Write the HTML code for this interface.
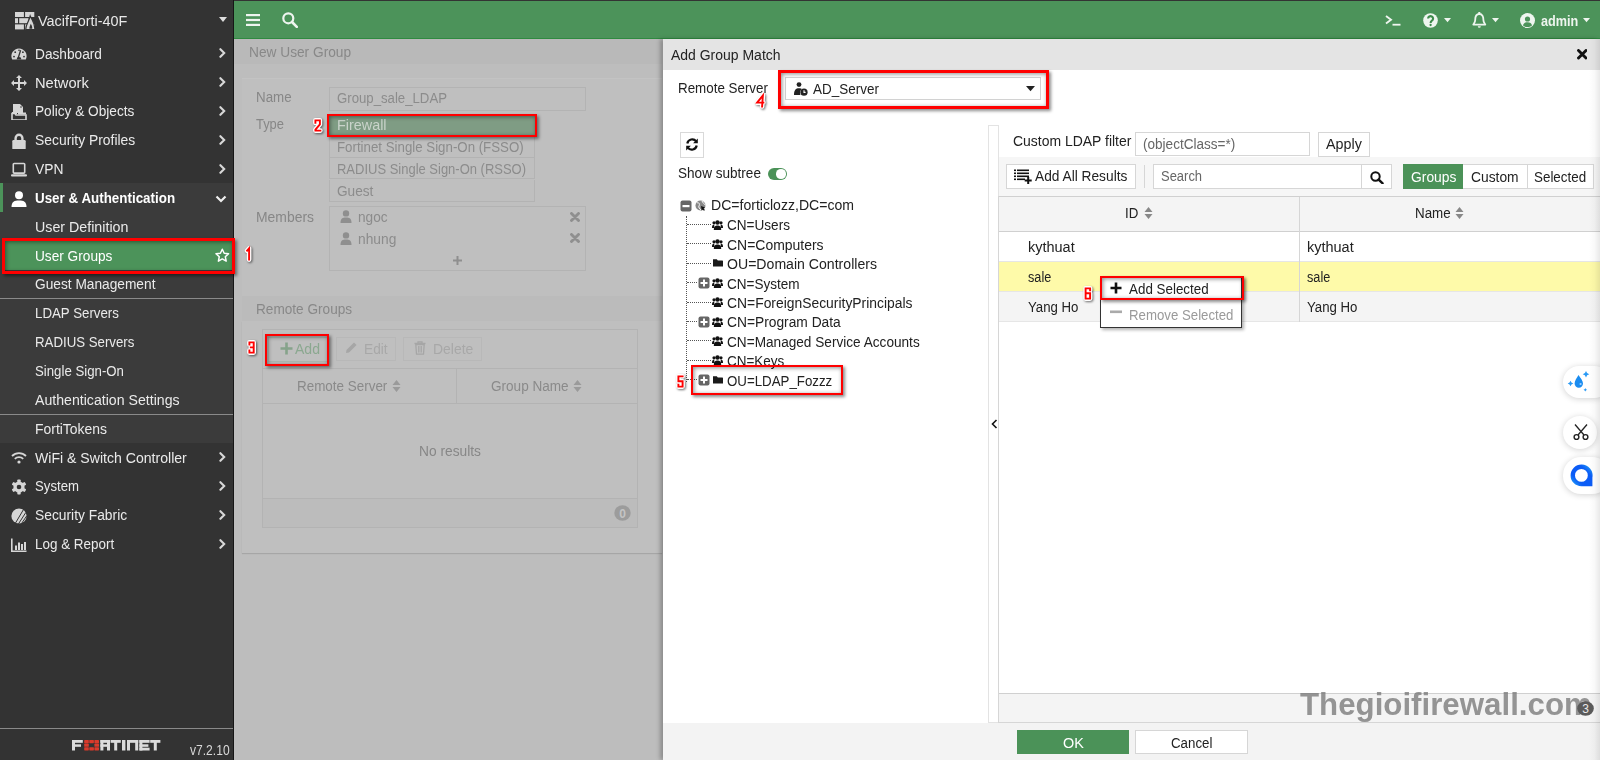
<!DOCTYPE html>
<html><head><meta charset="utf-8"><style>
html,body{margin:0;padding:0;}
body{width:1600px;height:760px;overflow:hidden;position:relative;font-family:"Liberation Sans", sans-serif;background:#fff;}
.b{position:absolute;}
.t{position:absolute;white-space:nowrap;line-height:20px;font-family:"Liberation Sans", sans-serif;}
.lab{position:absolute;white-space:nowrap;line-height:16px;font-family:"Liberation Sans", sans-serif;font-weight:bold;color:#f00;transform:scaleX(0.62);transform-origin:0 0;
 text-shadow:-1.5px 0 #fff,1.5px 0 #fff,0 -1.5px #fff,0 1.5px #fff,-1px -1px #fff,1px 1px #fff,-1px 1px #fff,1px -1px #fff,2px 2px 2px rgba(0,0,0,0.5);}
</style></head><body>
<div class="b" style="left:0.00px;top:0.00px;width:1600.00px;height:760.00px;background:#333"></div>
<div class="b" style="left:233.00px;top:0.00px;width:1.00px;height:760.00px;background:#161616"></div>
<div class="b" style="left:234.00px;top:1.00px;width:1366.00px;height:38.00px;background:#4c935a"></div>
<div class="b" style="left:234.00px;top:38.00px;width:1366.00px;height:1.00px;background:#2f8a40"></div>
<div class="b" style="left:0.00px;top:183.25px;width:233.00px;height:259.65px;background:#3b3b3b"></div>
<div class="b" style="left:0.00px;top:183.25px;width:3.00px;height:28.85px;background:#4c935a"></div>
<div class="b" style="left:0.00px;top:298.00px;width:233.00px;height:1.00px;background:#8a8a8a"></div>
<div class="b" style="left:0.00px;top:414.00px;width:233.00px;height:1.00px;background:#8a8a8a"></div>
<div class="b" style="left:3.00px;top:240.95px;width:230.00px;height:28.85px;background:#4c935a"></div>
<svg class="b" style="left:14.90px;top:11.60px;" width="21" height="18" viewBox="0 0 21 18"><g fill="#d6d6d6"><rect x="0" y="0" width="8.9" height="5"/><rect x="10.1" y="0" width="9.2" height="5"/><rect x="0" y="6.2" width="3" height="5"/><rect x="4.2" y="6.2" width="9.4" height="5"/><rect x="0" y="12.4" width="8.9" height="5"/><rect x="10.1" y="12.4" width="9.2" height="5"/></g><path d="M10.9 17.6 C10.2 13.2 13.6 10.5 15.2 4 C16.8 8 20.2 11 19.8 17.6 Z" fill="#d6d6d6" stroke="#333" stroke-width="1.2"/><path d="M14.4 16.8 C14.2 15 15.2 13.6 15.8 11.8 C16.8 13.4 17.5 15 17.2 16.8 Z" fill="#333"/></svg>
<div class="t" style="left:38.00px;top:10.52px;font-size:15.25px;color:#e8e8e8;font-weight:normal;transform:scaleX(0.9446);transform-origin:0 0;">VacifForti-40F</div>
<svg class="b" style="left:219.00px;top:17.00px;" width="8" height="6" viewBox="0 0 8 6"><path d="M0 0 H8 L4 5 Z" fill="#ddd"/></svg>
<svg class="b" style="left:10.50px;top:46.50px;" width="16" height="16" viewBox="0 0 16 16"><path d="M1.2 12.5 A7.6 7.6 0 1 1 14.8 12.5 Z" fill="#d6d6d6"/><path d="M7.2 11 L9.6 3.2" stroke="#333" stroke-width="1.3"/><path d="M5.6 12.5 A2.4 2.4 0 0 1 10.4 12.5 Z" fill="#333"/><circle cx="3" cy="9.6" r="0.9" fill="#333"/><circle cx="4.2" cy="5.2" r="0.9" fill="#333"/><circle cx="8" cy="3.2" r="0.8" fill="#333"/><circle cx="11.9" cy="5.2" r="0.9" fill="#333"/><circle cx="13" cy="9.6" r="0.9" fill="#333"/></svg>
<div class="t" style="left:34.80px;top:43.69px;font-size:14.75px;color:#eaeaea;font-weight:normal;transform:scaleX(0.9273);transform-origin:0 0;">Dashboard</div>
<svg class="b" style="left:218.50px;top:48.40px;" width="8" height="10" viewBox="0 0 8 10"><path d="M1.4 1.2 L5.2 5 L1.4 8.8" fill="none" stroke="#d8d8d8" stroke-width="2.1" stroke-linecap="round" stroke-linejoin="miter"/></svg>
<svg class="b" style="left:10.50px;top:75.35px;" width="16" height="16" viewBox="0 0 16 16"><path d="M8 0 L11 3 H9 V7 H13 V5 L16 8 L13 11 V9 H9 V13 H11 L8 16 L5 13 H7 V9 H3 V11 L0 8 L3 5 V7 H7 V3 H5 Z" fill="#d6d6d6"/></svg>
<div class="t" style="left:34.80px;top:72.54px;font-size:14.75px;color:#eaeaea;font-weight:normal;transform:scaleX(0.9954);transform-origin:0 0;">Network</div>
<svg class="b" style="left:218.50px;top:77.25px;" width="8" height="10" viewBox="0 0 8 10"><path d="M1.4 1.2 L5.2 5 L1.4 8.8" fill="none" stroke="#d8d8d8" stroke-width="2.1" stroke-linecap="round" stroke-linejoin="miter"/></svg>
<svg class="b" style="left:10.50px;top:104.20px;" width="16" height="16" viewBox="0 0 16 16"><path d="M2 0 H9 L12 3 V9 H2 Z" fill="#d6d6d6"/><circle cx="10" cy="3" r="0.8" fill="#333"/><path d="M1 9.5 H4 L5 11 H15 V16 H1 Z" fill="none" stroke="#d6d6d6" stroke-width="1.6"/><rect x="1" y="8" width="5" height="2" fill="#d6d6d6"/><rect x="7" y="8.5" width="8" height="2" fill="#d6d6d6"/></svg>
<div class="t" style="left:34.80px;top:101.39px;font-size:14.75px;color:#eaeaea;font-weight:normal;transform:scaleX(0.9256);transform-origin:0 0;">Policy &amp; Objects</div>
<svg class="b" style="left:218.50px;top:106.10px;" width="8" height="10" viewBox="0 0 8 10"><path d="M1.4 1.2 L5.2 5 L1.4 8.8" fill="none" stroke="#d8d8d8" stroke-width="2.1" stroke-linecap="round" stroke-linejoin="miter"/></svg>
<svg class="b" style="left:10.50px;top:133.05px;" width="16" height="16" viewBox="0 0 16 16"><path d="M4.6 7.5 V5.2 A3.4 3.4 0 0 1 11.4 5.2 V7.5" fill="none" stroke="#d6d6d6" stroke-width="2.4"/><rect x="1.3" y="7" width="13.4" height="9.5" rx="1.2" fill="#d6d6d6"/><circle cx="8" cy="4.2" r="0.0" fill="#333"/></svg>
<div class="t" style="left:34.80px;top:130.24px;font-size:14.75px;color:#eaeaea;font-weight:normal;transform:scaleX(0.9408);transform-origin:0 0;">Security Profiles</div>
<svg class="b" style="left:218.50px;top:134.95px;" width="8" height="10" viewBox="0 0 8 10"><path d="M1.4 1.2 L5.2 5 L1.4 8.8" fill="none" stroke="#d8d8d8" stroke-width="2.1" stroke-linecap="round" stroke-linejoin="miter"/></svg>
<svg class="b" style="left:10.50px;top:161.90px;" width="16" height="16" viewBox="0 0 16 16"><rect x="2.3" y="1.5" width="11.4" height="9.6" rx="0.8" fill="none" stroke="#d6d6d6" stroke-width="1.6"/><rect x="0" y="12.2" width="16" height="2.2" rx="1" fill="#d6d6d6"/></svg>
<div class="t" style="left:34.80px;top:159.09px;font-size:14.75px;color:#eaeaea;font-weight:normal;transform:scaleX(0.9388);transform-origin:0 0;">VPN</div>
<svg class="b" style="left:218.50px;top:163.80px;" width="8" height="10" viewBox="0 0 8 10"><path d="M1.4 1.2 L5.2 5 L1.4 8.8" fill="none" stroke="#d8d8d8" stroke-width="2.1" stroke-linecap="round" stroke-linejoin="miter"/></svg>
<svg class="b" style="left:10.50px;top:190.75px;" width="16" height="16" viewBox="0 0 16 16"><circle cx="8" cy="4.3" r="4" fill="#fff"/><path d="M0.5 16 C0.5 10.5 3.5 9.5 8 9.5 C12.5 9.5 15.5 10.5 15.5 16 Z" fill="#fff"/></svg>
<div class="t" style="left:34.80px;top:187.94px;font-size:14.75px;color:#fff;font-weight:bold;transform:scaleX(0.9076);transform-origin:0 0;">User &amp; Authentication</div>
<svg class="b" style="left:215.00px;top:194.75px;" width="12" height="8" viewBox="0 0 12 8"><path d="M1.5 1.5 L6 6 L10.5 1.5" fill="none" stroke="#eee" stroke-width="2.2"/></svg>
<div class="t" style="left:34.80px;top:216.79px;font-size:14.75px;color:#eaeaea;font-weight:normal;transform:scaleX(0.9654);transform-origin:0 0;">User Definition</div>
<div class="t" style="left:34.80px;top:245.64px;font-size:14.75px;color:#fff;font-weight:normal;transform:scaleX(0.9257);transform-origin:0 0;">User Groups</div>
<div class="t" style="left:34.80px;top:274.49px;font-size:14.75px;color:#eaeaea;font-weight:normal;transform:scaleX(0.9297);transform-origin:0 0;">Guest Management</div>
<div class="t" style="left:34.80px;top:303.34px;font-size:14.75px;color:#eaeaea;font-weight:normal;transform:scaleX(0.9008);transform-origin:0 0;">LDAP Servers</div>
<div class="t" style="left:34.80px;top:332.19px;font-size:14.75px;color:#eaeaea;font-weight:normal;transform:scaleX(0.8984);transform-origin:0 0;">RADIUS Servers</div>
<div class="t" style="left:34.80px;top:361.04px;font-size:14.75px;color:#eaeaea;font-weight:normal;transform:scaleX(0.8967);transform-origin:0 0;">Single Sign-On</div>
<div class="t" style="left:34.80px;top:389.89px;font-size:14.75px;color:#eaeaea;font-weight:normal;transform:scaleX(0.9583);transform-origin:0 0;">Authentication Settings</div>
<div class="t" style="left:34.80px;top:418.74px;font-size:14.75px;color:#eaeaea;font-weight:normal;transform:scaleX(0.9443);transform-origin:0 0;">FortiTokens</div>
<svg class="b" style="left:10.50px;top:450.40px;" width="16" height="16" viewBox="0 0 16 16"><path d="M1 6 A10 10 0 0 1 15 6" fill="none" stroke="#d6d6d6" stroke-width="1.8"/><path d="M3.8 8.8 A6 6 0 0 1 12.2 8.8" fill="none" stroke="#d6d6d6" stroke-width="1.8"/><circle cx="8" cy="12" r="1.6" fill="#d6d6d6"/></svg>
<div class="t" style="left:34.80px;top:447.59px;font-size:14.75px;color:#eaeaea;font-weight:normal;transform:scaleX(0.9547);transform-origin:0 0;">WiFi &amp; Switch Controller</div>
<svg class="b" style="left:218.50px;top:452.30px;" width="8" height="10" viewBox="0 0 8 10"><path d="M1.4 1.2 L5.2 5 L1.4 8.8" fill="none" stroke="#d8d8d8" stroke-width="2.1" stroke-linecap="round" stroke-linejoin="miter"/></svg>
<svg class="b" style="left:10.50px;top:479.25px;" width="16" height="16" viewBox="0 0 16 16"><g fill="#d6d6d6"><circle cx="8" cy="8" r="5.6"/><g transform="translate(8 8)"><rect x="-1.7" y="-7.5" width="3.4" height="15" rx="0.8"/><rect x="-1.7" y="-7.5" width="3.4" height="15" rx="0.8" transform="rotate(60)"/><rect x="-1.7" y="-7.5" width="3.4" height="15" rx="0.8" transform="rotate(120)"/></g></g><circle cx="8" cy="8" r="2.3" fill="#333"/></svg>
<div class="t" style="left:34.80px;top:476.44px;font-size:14.75px;color:#eaeaea;font-weight:normal;transform:scaleX(0.8934);transform-origin:0 0;">System</div>
<svg class="b" style="left:218.50px;top:481.15px;" width="8" height="10" viewBox="0 0 8 10"><path d="M1.4 1.2 L5.2 5 L1.4 8.8" fill="none" stroke="#d8d8d8" stroke-width="2.1" stroke-linecap="round" stroke-linejoin="miter"/></svg>
<svg class="b" style="left:10.50px;top:508.10px;" width="16" height="16" viewBox="0 0 16 16"><circle cx="8" cy="8" r="7.6" fill="#d6d6d6"/><path d="M4.5 15 L12.5 1.5 M7.5 15.8 L14.8 4.5 M10.5 15.5 L15.8 7.8" stroke="#333" stroke-width="1"/></svg>
<div class="t" style="left:34.80px;top:505.29px;font-size:14.75px;color:#eaeaea;font-weight:normal;transform:scaleX(0.9364);transform-origin:0 0;">Security Fabric</div>
<svg class="b" style="left:218.50px;top:510.00px;" width="8" height="10" viewBox="0 0 8 10"><path d="M1.4 1.2 L5.2 5 L1.4 8.8" fill="none" stroke="#d8d8d8" stroke-width="2.1" stroke-linecap="round" stroke-linejoin="miter"/></svg>
<svg class="b" style="left:10.50px;top:536.95px;" width="16" height="16" viewBox="0 0 16 16"><path d="M0.8 1.5 V14.2 H15.5" fill="none" stroke="#d6d6d6" stroke-width="1.6"/><rect x="4" y="8.5" width="2" height="4.5" fill="#d6d6d6"/><rect x="7" y="5.5" width="2" height="7.5" fill="#d6d6d6"/><rect x="10" y="7" width="2" height="6" fill="#d6d6d6"/><rect x="13" y="5" width="2" height="8" fill="#d6d6d6"/></svg>
<div class="t" style="left:34.80px;top:534.14px;font-size:14.75px;color:#eaeaea;font-weight:normal;transform:scaleX(0.9115);transform-origin:0 0;">Log &amp; Report</div>
<svg class="b" style="left:218.50px;top:538.85px;" width="8" height="10" viewBox="0 0 8 10"><path d="M1.4 1.2 L5.2 5 L1.4 8.8" fill="none" stroke="#d8d8d8" stroke-width="2.1" stroke-linecap="round" stroke-linejoin="miter"/></svg>
<svg class="b" style="left:214.50px;top:247.50px;" width="15" height="15" viewBox="0 0 15 15"><path d="M7.3 1.2 L9.2 5.2 L13.6 5.7 L10.3 8.7 L11.2 13.1 L7.3 10.9 L3.4 13.1 L4.3 8.7 L1 5.7 L5.4 5.2 Z" fill="none" stroke="#fff" stroke-width="1.5" stroke-linejoin="round"/></svg>
<div class="b" style="left:0.00px;top:728.00px;width:233.00px;height:1.00px;background:#8a8a8a"></div>
<svg class="b" style="left:72.00px;top:740.00px;" width="90" height="11" viewBox="0 0 90 11"><g fill="#dcdcdc"><rect x="0" y="0" width="10.8" height="2.8"/><rect x="0" y="0" width="3" height="10.5"/><rect x="0" y="4.3" width="9" height="2.5"/><rect x="28.4" y="0" width="3" height="10.5"/><rect x="28.4" y="0" width="9.6" height="2.8"/><rect x="35" y="0" width="3" height="6.8"/><rect x="28.4" y="4.3" width="9.6" height="2.5"/><rect x="35" y="6.5" width="3" height="4"/><rect x="38.6" y="0" width="10.2" height="2.8"/><rect x="42.2" y="0" width="3" height="10.5"/><rect x="50" y="0" width="3.4" height="10.5"/><rect x="55" y="0" width="3" height="10.5"/><rect x="55" y="0" width="11.2" height="2.8"/><rect x="63.2" y="0" width="3" height="10.5"/><rect x="67.4" y="0" width="3" height="10.5"/><rect x="67.4" y="0" width="10.2" height="2.8"/><rect x="67.4" y="4.3" width="9" height="2.5"/><rect x="67.4" y="7.7" width="10.2" height="2.8"/><rect x="78.2" y="0" width="10.2" height="2.8"/><rect x="81.8" y="0" width="3" height="10.5"/></g><g fill="#da3a2b"><rect x="12.2" y="0.0" width="4.6" height="3.2" rx="0.6"/><rect x="17.3" y="0.0" width="4.6" height="3.2" rx="0.6"/><rect x="22.4" y="0.0" width="4.6" height="3.2" rx="0.6"/><rect x="12.2" y="3.6" width="4.6" height="3.2" rx="0.6"/><rect x="22.4" y="3.6" width="4.6" height="3.2" rx="0.6"/><rect x="12.2" y="7.2" width="4.6" height="3.2" rx="0.6"/><rect x="17.3" y="7.2" width="4.6" height="3.2" rx="0.6"/><rect x="22.4" y="7.2" width="4.6" height="3.2" rx="0.6"/></g></svg>
<div class="t" style="left:189.50px;top:741.24px;font-size:13.75px;color:#d8d8d8;font-weight:normal;transform:scaleX(0.8778);transform-origin:0 0;">v7.2.10</div>
<svg class="b" style="left:245.50px;top:14.00px;" width="14" height="12" viewBox="0 0 14 12"><rect x="0" y="0" width="14" height="2.2" fill="#eef5ef"/><rect x="0" y="4.9" width="14" height="2.2" fill="#eef5ef"/><rect x="0" y="9.8" width="14" height="2.2" fill="#eef5ef"/></svg>
<svg class="b" style="left:281.50px;top:12.00px;" width="16" height="16" viewBox="0 0 16 16"><circle cx="6.3" cy="6.3" r="5" fill="none" stroke="#eef5ef" stroke-width="2.2"/><path d="M10 10 L14.8 14.8" stroke="#eef5ef" stroke-width="2.6" stroke-linecap="round"/></svg>
<svg class="b" style="left:1385.00px;top:14.50px;" width="17" height="11" viewBox="0 0 17 11"><path d="M1 1 L6 4.8 L1 8.6" fill="none" stroke="#eef5ef" stroke-width="1.9"/><rect x="7.5" y="8.8" width="8" height="1.8" fill="#eef5ef"/></svg>
<svg class="b" style="left:1423.00px;top:12.50px;" width="16" height="16" viewBox="0 0 16 16"><circle cx="7.5" cy="7.5" r="7.3" fill="#eef5ef"/><path d="M5.1 5.6 A2.5 2.4 0 1 1 8.9 7.6 C7.8 8.3 7.6 8.7 7.6 10" fill="none" stroke="#3d8a4b" stroke-width="2.1"/><circle cx="7.6" cy="12" r="1.15" fill="#3d8a4b"/></svg>
<svg class="b" style="left:1444.00px;top:18.00px;" width="7" height="5" viewBox="0 0 7 5"><path d="M0 0 H7 L3.5 4.2 Z" fill="#eef5ef"/></svg>
<svg class="b" style="left:1472.00px;top:12.00px;" width="15" height="16" viewBox="0 0 15 16"><path d="M7.3 2 C4 2 3.2 5 3.2 8 C3.2 11 1.3 11.8 1.3 12.6 H13.3 C13.3 11.8 11.4 11 11.4 8 C11.4 5 10.6 2 7.3 2 Z" fill="none" stroke="#eef5ef" stroke-width="1.8" stroke-linejoin="round"/><rect x="6.3" y="0" width="2" height="2.5" fill="#eef5ef"/><path d="M5.8 14.3 H8.8 A1.5 1.5 0 0 1 5.8 14.3Z" fill="#eef5ef"/></svg>
<svg class="b" style="left:1492.00px;top:18.00px;" width="7" height="5" viewBox="0 0 7 5"><path d="M0 0 H7 L3.5 4.2 Z" fill="#eef5ef"/></svg>
<svg class="b" style="left:1520.00px;top:12.50px;" width="16" height="16" viewBox="0 0 16 16"><circle cx="7.5" cy="7.5" r="7.5" fill="#eef5ef"/><circle cx="7.5" cy="6" r="2.6" fill="#4c935a"/><path d="M3 12.5 C3.5 10 5 9.3 7.5 9.3 C10 9.3 11.5 10 12 12.5 C10.5 13.6 9 14 7.5 14 C6 14 4.5 13.6 3 12.5Z" fill="#4c935a"/></svg>
<div class="t" style="left:1540.80px;top:11.20px;font-size:15px;color:#eef5ef;font-weight:bold;transform:scaleX(0.845);transform-origin:0 0;">admin</div>
<svg class="b" style="left:1583.00px;top:18.00px;" width="7" height="5" viewBox="0 0 7 5"><path d="M0 0 H7 L3.5 4.2 Z" fill="#eef5ef"/></svg>
<div class="b" style="left:234.00px;top:39.00px;width:429.00px;height:721.00px;background:#bdbdbd"></div>
<div class="b" style="left:234.00px;top:39.00px;width:428.00px;height:25.00px;background:#b9b9b9"></div>
<div class="t" style="left:249.00px;top:41.89px;font-size:14.75px;color:#888;font-weight:normal;transform:scaleX(0.9294);transform-origin:0 0;">New User Group</div>
<div class="b" style="left:242.00px;top:78.00px;width:420.00px;height:218.00px;background:#bfbfbf;border-top:1px solid #c3c3c3"></div>
<div class="t" style="left:256.40px;top:87.29px;font-size:14.75px;color:#878787;font-weight:normal;transform:scaleX(0.9045);transform-origin:0 0;">Name</div>
<div class="t" style="left:256.40px;top:113.69px;font-size:14.75px;color:#878787;font-weight:normal;transform:scaleX(0.8750);transform-origin:0 0;">Type</div>
<div class="t" style="left:255.70px;top:206.89px;font-size:14.75px;color:#878787;font-weight:normal;transform:scaleX(0.9431);transform-origin:0 0;">Members</div>
<div class="b" style="left:329.00px;top:87.00px;width:257.00px;height:23.50px;border:1px solid #b3b3b3;box-sizing:border-box;background:#bfbfbf"></div>
<div class="t" style="left:337.10px;top:87.89px;font-size:14.75px;color:#8c8c8c;font-weight:normal;transform:scaleX(0.8943);transform-origin:0 0;">Group_sale_LDAP</div>
<div class="b" style="left:329.00px;top:114.00px;width:208.00px;height:22.00px;background:#7f9c84"></div>
<div class="t" style="left:337.10px;top:114.89px;font-size:14.75px;color:#c9d3ca;font-weight:normal;transform:scaleX(0.9754);transform-origin:0 0;">Firewall</div>
<div class="b" style="left:329.00px;top:136.00px;width:206.00px;height:21.60px;border:1px solid #b3b3b3;box-sizing:border-box;border-top:none"></div>
<div class="t" style="left:337.10px;top:137.19px;font-size:14.75px;color:#8c8c8c;font-weight:normal;transform:scaleX(0.9002);transform-origin:0 0;">Fortinet Single Sign-On (FSSO)</div>
<div class="b" style="left:329.00px;top:157.60px;width:206.00px;height:21.90px;border:1px solid #b3b3b3;box-sizing:border-box;border-top:none"></div>
<div class="t" style="left:337.10px;top:159.09px;font-size:14.75px;color:#8c8c8c;font-weight:normal;transform:scaleX(0.8801);transform-origin:0 0;">RADIUS Single Sign-On (RSSO)</div>
<div class="b" style="left:329.00px;top:179.50px;width:206.00px;height:22.30px;border:1px solid #b3b3b3;box-sizing:border-box;border-top:none"></div>
<div class="t" style="left:337.10px;top:181.39px;font-size:14.75px;color:#8c8c8c;font-weight:normal;transform:scaleX(0.9248);transform-origin:0 0;">Guest</div>
<div class="b" style="left:329.00px;top:205.50px;width:257.00px;height:65.80px;border:1px solid #b3b3b3;box-sizing:border-box"></div>
<svg class="b" style="left:339.50px;top:210.00px;" width="12" height="13" viewBox="0 0 12 13"><circle cx="6" cy="3.4" r="3.2" fill="#8f8f8f"/><path d="M0.5 13 C0.5 8.5 2.5 7.6 6 7.6 C9.5 7.6 11.5 8.5 11.5 13 Z" fill="#8f8f8f"/></svg>
<svg class="b" style="left:339.50px;top:231.50px;" width="12" height="13" viewBox="0 0 12 13"><circle cx="6" cy="3.4" r="3.2" fill="#8f8f8f"/><path d="M0.5 13 C0.5 8.5 2.5 7.6 6 7.6 C9.5 7.6 11.5 8.5 11.5 13 Z" fill="#8f8f8f"/></svg>
<div class="t" style="left:358.00px;top:206.89px;font-size:14.75px;color:#8c8c8c;font-weight:normal;transform:scaleX(0.9250);transform-origin:0 0;">ngoc</div>
<div class="t" style="left:358.00px;top:228.89px;font-size:14.75px;color:#8c8c8c;font-weight:normal;transform:scaleX(0.9341);transform-origin:0 0;">nhung</div>
<svg class="b" style="left:569.50px;top:211.50px;" width="10" height="10" viewBox="0 0 10 10"><path d="M1.5 1.5 L8.5 8.5 M8.5 1.5 L1.5 8.5" stroke="#8f8f8f" stroke-width="2.9" stroke-linecap="round"/></svg>
<svg class="b" style="left:569.50px;top:232.50px;" width="10" height="10" viewBox="0 0 10 10"><path d="M1.5 1.5 L8.5 8.5 M8.5 1.5 L1.5 8.5" stroke="#8f8f8f" stroke-width="2.9" stroke-linecap="round"/></svg>
<svg class="b" style="left:453.00px;top:255.50px;" width="9" height="9" viewBox="0 0 9 9"><path d="M4.5 0 V9 M0 4.5 H9" stroke="#8f8f8f" stroke-width="2"/></svg>
<div class="b" style="left:242.00px;top:296.00px;width:420.00px;height:25.00px;background:#bbbbbb"></div>
<div class="t" style="left:255.70px;top:298.69px;font-size:14.75px;color:#888;font-weight:normal;transform:scaleX(0.9231);transform-origin:0 0;">Remote Groups</div>
<div class="b" style="left:242.00px;top:321.00px;width:420.00px;height:232.00px;background:#bfbfbf;box-shadow:0 1px 1px rgba(0,0,0,0.12)"></div>
<div class="b" style="left:262.00px;top:328.50px;width:376.00px;height:199.00px;border:1px solid #b3b3b3;box-sizing:border-box;background:#bfbfbf"></div>
<div class="b" style="left:262.00px;top:368.00px;width:376.00px;height:1.00px;background:#b3b3b3"></div>
<div class="b" style="left:262.00px;top:403.00px;width:376.00px;height:1.00px;background:#b3b3b3"></div>
<div class="b" style="left:262.00px;top:498.00px;width:376.00px;height:1.00px;background:#b3b3b3"></div>
<div class="b" style="left:263.00px;top:499.00px;width:374.00px;height:28.00px;background:#bcbcbc"></div>
<div class="b" style="left:456.00px;top:369.00px;width:1.00px;height:34.00px;background:#b3b3b3"></div>
<div class="b" style="left:268.00px;top:337.00px;width:60.00px;height:25.00px;border:1px solid #b0b8b1;box-sizing:border-box"></div>
<svg class="b" style="left:279.50px;top:341.50px;" width="13" height="13" viewBox="0 0 13 13"><path d="M6.5 0.5 V12.5 M0.5 6.5 H12.5" stroke="#86a38b" stroke-width="2.6"/></svg>
<div class="t" style="left:294.80px;top:338.69px;font-size:14.75px;color:#8ba890;font-weight:normal;transform:scaleX(0.9524);transform-origin:0 0;">Add</div>
<div class="b" style="left:335.50px;top:337.00px;width:60.50px;height:24.00px;border:1px solid #b8b8b8;box-sizing:border-box"></div>
<svg class="b" style="left:344.00px;top:341.00px;" width="14" height="14" viewBox="0 0 14 14"><path d="M2 12 L2.5 9 L10 1.5 L12.5 4 L5 11.5 Z" fill="#a6a6a6"/></svg>
<div class="t" style="left:364.20px;top:338.69px;font-size:14.75px;color:#a8a8a8;font-weight:normal;transform:scaleX(0.9294);transform-origin:0 0;">Edit</div>
<div class="b" style="left:403.00px;top:337.00px;width:78.50px;height:24.00px;border:1px solid #b8b8b8;box-sizing:border-box"></div>
<svg class="b" style="left:414.00px;top:341.00px;" width="12" height="14" viewBox="0 0 12 14"><path d="M0.5 2.5 H11.5 M4 2.5 V0.8 H8 V2.5" stroke="#a6a6a6" stroke-width="1.3" fill="none"/><path d="M1.8 3.5 H10.2 L9.5 13.2 H2.5 Z" fill="none" stroke="#a6a6a6" stroke-width="1.3"/><path d="M4.5 5 V11.5 M6 5 V11.5 M7.5 5 V11.5" stroke="#a6a6a6" stroke-width="0.9"/></svg>
<div class="t" style="left:433.20px;top:338.69px;font-size:14.75px;color:#a8a8a8;font-weight:normal;transform:scaleX(0.9450);transform-origin:0 0;">Delete</div>
<div class="t" style="left:297.10px;top:375.59px;font-size:14.75px;color:#8a8a8a;font-weight:normal;transform:scaleX(0.9108);transform-origin:0 0;">Remote Server</div>
<svg class="b" style="left:391.50px;top:379.00px;" width="9" height="14" viewBox="0 0 9 14"><path d="M0.5 6 L4.5 1 L8.5 6 Z M0.5 8 L4.5 13 L8.5 8 Z" fill="#9a9a9a"/></svg>
<div class="t" style="left:490.60px;top:375.59px;font-size:14.75px;color:#8a8a8a;font-weight:normal;transform:scaleX(0.9195);transform-origin:0 0;">Group Name</div>
<svg class="b" style="left:573.00px;top:379.00px;" width="9" height="14" viewBox="0 0 9 14"><path d="M0.5 6 L4.5 1 L8.5 6 Z M0.5 8 L4.5 13 L8.5 8 Z" fill="#9a9a9a"/></svg>
<div class="t" style="left:419.00px;top:441.29px;font-size:14.75px;color:#878787;font-weight:normal;transform:scaleX(0.9323);transform-origin:0 0;">No results</div>
<svg class="b" style="left:614.00px;top:504.50px;" width="17" height="16" viewBox="0 0 17 16"><ellipse cx="8.5" cy="8" rx="8.2" ry="7.8" fill="#9c9c9c"/><text x="8.5" y="12.5" text-anchor="middle" font-family="Liberation Sans" font-weight="bold" font-size="12" fill="#c4c4c4">0</text></svg>
<div class="b" style="left:663.00px;top:39.00px;width:937.00px;height:721.00px;background:#fff;box-shadow:-3px 0 4px rgba(0,0,0,0.25)"></div>
<div class="b" style="left:663.00px;top:39.00px;width:937.00px;height:31.00px;background:#e4e4e4"></div>
<div class="t" style="left:670.50px;top:44.72px;font-size:15.25px;color:#222;font-weight:normal;transform:scaleX(0.9163);transform-origin:0 0;">Add Group Match</div>
<svg class="b" style="left:1576.50px;top:49.00px;" width="10.5" height="10.5" viewBox="0 0 10.5 10.5"><path d="M1.5 1.5 L9.0 9.0 M9.0 1.5 L1.5 9.0" stroke="#111" stroke-width="2.9" stroke-linecap="round"/></svg>
<div class="t" style="left:678.40px;top:78.09px;font-size:14.75px;color:#222;font-weight:normal;transform:scaleX(0.9068);transform-origin:0 0;">Remote Server</div>
<div class="b" style="left:784.50px;top:77.00px;width:256.50px;height:22.50px;border:1px solid #d2d2d2;box-sizing:border-box;background:#fff"></div>
<svg class="b" style="left:793.50px;top:82.00px;" width="14" height="14" viewBox="0 0 14 14"><circle cx="5" cy="2.6" r="2.4" fill="#222"/><path d="M0 13 C0 8 1.8 6.3 5 6.3 C6.5 6.3 7.3 6.6 8 7 C6.5 8 6 9.5 6 11 C6 12 6.3 12.6 6.6 13 Z" fill="#222"/><circle cx="10" cy="10.2" r="3.6" fill="#222"/><path d="M10 8.2 V10.4 H11.6" stroke="#fff" stroke-width="1.1" fill="none"/></svg>
<div class="t" style="left:813.00px;top:78.72px;font-size:15.25px;color:#222;font-weight:normal;transform:scaleX(0.8832);transform-origin:0 0;">AD_Server</div>
<svg class="b" style="left:1025.50px;top:85.50px;" width="9" height="6" viewBox="0 0 9 6"><path d="M0 0 H9 L4.5 5.2 Z" fill="#222"/></svg>
<div class="b" style="left:680.00px;top:132.00px;width:23.50px;height:25.50px;border:1px solid #d9d9d9;box-sizing:border-box"></div>
<svg class="b" style="left:684.50px;top:137.00px;" width="14" height="15" viewBox="0 0 14 15"><path d="M2.3 6.5 A5 5 0 0 1 11.2 4.4" fill="none" stroke="#111" stroke-width="2.2"/><path d="M12.8 1.5 V6.2 H8.1 Z" fill="#111"/><path d="M11.7 8.5 A5 5 0 0 1 2.8 10.6" fill="none" stroke="#111" stroke-width="2.2"/><path d="M1.2 13.5 V8.8 H5.9 Z" fill="#111"/></svg>
<div class="t" style="left:677.80px;top:162.79px;font-size:14.75px;color:#222;font-weight:normal;transform:scaleX(0.9197);transform-origin:0 0;">Show subtree</div>
<div class="b" style="left:768.40px;top:167.60px;width:19.10px;height:12.40px;background:#4b9258;border-radius:7px"></div>
<div class="b" style="left:775.60px;top:168.90px;width:10.60px;height:9.80px;background:#fff;border-radius:50%"></div>
<svg class="b" style="left:680.00px;top:199.50px;" width="12" height="12" viewBox="0 0 12 12"><rect x="0.5" y="0.5" width="11" height="11" rx="2" fill="#666"/><rect x="2.5" y="5" width="7" height="2.2" fill="#fff"/></svg>
<svg class="b" style="left:695.00px;top:200.00px;" width="11" height="11" viewBox="0 0 11 11"><circle cx="5.5" cy="5.5" r="5" fill="#888"/><path d="M2 3 C4 2 5 4 4 6 C3 7 5 9 6 10 M7 1 C8 3 9 4 10.5 5" stroke="#fff" stroke-width="1" fill="none"/><path d="M6 6 L10 7.5 L8.5 8.5 L10 10 L9 10.8 L7.5 9.5 L6.8 11 Z" fill="#111"/></svg>
<div class="t" style="left:710.50px;top:194.69px;font-size:14.75px;color:#222;font-weight:normal;transform:scaleX(0.9533);transform-origin:0 0;">DC=forticlozz,DC=com</div>
<div class="b" style="left:686px;top:216px;width:0;height:166px;border-left:1px dotted #555"></div>
<div class="b" style="left:687px;top:223.9px;width:24px;height:0;border-top:1px dotted #555"></div>
<svg class="b" style="left:712.00px;top:219.50px;" width="11" height="10" viewBox="0 0 11 10"><g fill="#111"><circle cx="5.5" cy="2.5" r="2.2"/><path d="M1.8 10 C1.8 6.5 3.3 5.5 5.5 5.5 C7.7 5.5 9.2 6.5 9.2 10 Z"/><circle cx="2" cy="2.8" r="1.6"/><circle cx="9" cy="2.8" r="1.6"/><path d="M0 8 C0 5.3 0.8 4.8 2.2 4.8 L2.5 8 Z"/><path d="M11 8 C11 5.3 10.2 4.8 8.8 4.8 L8.5 8 Z"/></g></svg>
<div class="t" style="left:727.00px;top:215.39px;font-size:14.75px;color:#222;font-weight:normal;transform:scaleX(0.9197);transform-origin:0 0;">CN=Users</div>
<div class="b" style="left:687px;top:243.3px;width:24px;height:0;border-top:1px dotted #555"></div>
<svg class="b" style="left:712.00px;top:238.90px;" width="11" height="10" viewBox="0 0 11 10"><g fill="#111"><circle cx="5.5" cy="2.5" r="2.2"/><path d="M1.8 10 C1.8 6.5 3.3 5.5 5.5 5.5 C7.7 5.5 9.2 6.5 9.2 10 Z"/><circle cx="2" cy="2.8" r="1.6"/><circle cx="9" cy="2.8" r="1.6"/><path d="M0 8 C0 5.3 0.8 4.8 2.2 4.8 L2.5 8 Z"/><path d="M11 8 C11 5.3 10.2 4.8 8.8 4.8 L8.5 8 Z"/></g></svg>
<div class="t" style="left:727.00px;top:234.79px;font-size:14.75px;color:#222;font-weight:normal;transform:scaleX(0.9461);transform-origin:0 0;">CN=Computers</div>
<div class="b" style="left:687px;top:262.7px;width:24px;height:0;border-top:1px dotted #555"></div>
<svg class="b" style="left:712.60px;top:259.10px;" width="10" height="8" viewBox="0 0 10 8"><path d="M0 0.3 H3.8 L4.8 1.6 H9.4 A0.6 0.6 0 0 1 10 2.2 V7.6 H0 Z" fill="#1a1a1a"/></svg>
<div class="t" style="left:727.00px;top:254.19px;font-size:14.75px;color:#222;font-weight:normal;transform:scaleX(0.9554);transform-origin:0 0;">OU=Domain Controllers</div>
<div class="b" style="left:687px;top:282.1px;width:10px;height:0;border-top:1px dotted #555"></div>
<svg class="b" style="left:697.50px;top:277.20px;" width="12" height="12" viewBox="0 0 12 12"><rect x="0.5" y="0.5" width="11" height="11" rx="2" fill="#666"/><rect x="2.5" y="5" width="7" height="2" fill="#fff"/><rect x="5" y="2.5" width="2" height="7" fill="#fff"/></svg>
<svg class="b" style="left:712.00px;top:277.70px;" width="11" height="10" viewBox="0 0 11 10"><g fill="#111"><circle cx="5.5" cy="2.5" r="2.2"/><path d="M1.8 10 C1.8 6.5 3.3 5.5 5.5 5.5 C7.7 5.5 9.2 6.5 9.2 10 Z"/><circle cx="2" cy="2.8" r="1.6"/><circle cx="9" cy="2.8" r="1.6"/><path d="M0 8 C0 5.3 0.8 4.8 2.2 4.8 L2.5 8 Z"/><path d="M11 8 C11 5.3 10.2 4.8 8.8 4.8 L8.5 8 Z"/></g></svg>
<div class="t" style="left:727.00px;top:273.59px;font-size:14.75px;color:#222;font-weight:normal;transform:scaleX(0.9177);transform-origin:0 0;">CN=System</div>
<div class="b" style="left:687px;top:301.5px;width:24px;height:0;border-top:1px dotted #555"></div>
<svg class="b" style="left:712.00px;top:297.10px;" width="11" height="10" viewBox="0 0 11 10"><g fill="#111"><circle cx="5.5" cy="2.5" r="2.2"/><path d="M1.8 10 C1.8 6.5 3.3 5.5 5.5 5.5 C7.7 5.5 9.2 6.5 9.2 10 Z"/><circle cx="2" cy="2.8" r="1.6"/><circle cx="9" cy="2.8" r="1.6"/><path d="M0 8 C0 5.3 0.8 4.8 2.2 4.8 L2.5 8 Z"/><path d="M11 8 C11 5.3 10.2 4.8 8.8 4.8 L8.5 8 Z"/></g></svg>
<div class="t" style="left:727.00px;top:292.99px;font-size:14.75px;color:#222;font-weight:normal;transform:scaleX(0.9409);transform-origin:0 0;">CN=ForeignSecurityPrincipals</div>
<div class="b" style="left:687px;top:320.9px;width:10px;height:0;border-top:1px dotted #555"></div>
<svg class="b" style="left:697.50px;top:316.00px;" width="12" height="12" viewBox="0 0 12 12"><rect x="0.5" y="0.5" width="11" height="11" rx="2" fill="#666"/><rect x="2.5" y="5" width="7" height="2" fill="#fff"/><rect x="5" y="2.5" width="2" height="7" fill="#fff"/></svg>
<svg class="b" style="left:712.00px;top:316.50px;" width="11" height="10" viewBox="0 0 11 10"><g fill="#111"><circle cx="5.5" cy="2.5" r="2.2"/><path d="M1.8 10 C1.8 6.5 3.3 5.5 5.5 5.5 C7.7 5.5 9.2 6.5 9.2 10 Z"/><circle cx="2" cy="2.8" r="1.6"/><circle cx="9" cy="2.8" r="1.6"/><path d="M0 8 C0 5.3 0.8 4.8 2.2 4.8 L2.5 8 Z"/><path d="M11 8 C11 5.3 10.2 4.8 8.8 4.8 L8.5 8 Z"/></g></svg>
<div class="t" style="left:727.00px;top:312.39px;font-size:14.75px;color:#222;font-weight:normal;transform:scaleX(0.9347);transform-origin:0 0;">CN=Program Data</div>
<div class="b" style="left:687px;top:340.3px;width:24px;height:0;border-top:1px dotted #555"></div>
<svg class="b" style="left:712.00px;top:335.90px;" width="11" height="10" viewBox="0 0 11 10"><g fill="#111"><circle cx="5.5" cy="2.5" r="2.2"/><path d="M1.8 10 C1.8 6.5 3.3 5.5 5.5 5.5 C7.7 5.5 9.2 6.5 9.2 10 Z"/><circle cx="2" cy="2.8" r="1.6"/><circle cx="9" cy="2.8" r="1.6"/><path d="M0 8 C0 5.3 0.8 4.8 2.2 4.8 L2.5 8 Z"/><path d="M11 8 C11 5.3 10.2 4.8 8.8 4.8 L8.5 8 Z"/></g></svg>
<div class="t" style="left:727.00px;top:331.79px;font-size:14.75px;color:#222;font-weight:normal;transform:scaleX(0.9236);transform-origin:0 0;">CN=Managed Service Accounts</div>
<div class="b" style="left:687px;top:359.7px;width:24px;height:0;border-top:1px dotted #555"></div>
<svg class="b" style="left:712.00px;top:355.30px;" width="11" height="10" viewBox="0 0 11 10"><g fill="#111"><circle cx="5.5" cy="2.5" r="2.2"/><path d="M1.8 10 C1.8 6.5 3.3 5.5 5.5 5.5 C7.7 5.5 9.2 6.5 9.2 10 Z"/><circle cx="2" cy="2.8" r="1.6"/><circle cx="9" cy="2.8" r="1.6"/><path d="M0 8 C0 5.3 0.8 4.8 2.2 4.8 L2.5 8 Z"/><path d="M11 8 C11 5.3 10.2 4.8 8.8 4.8 L8.5 8 Z"/></g></svg>
<div class="t" style="left:727.00px;top:351.19px;font-size:14.75px;color:#222;font-weight:normal;transform:scaleX(0.9147);transform-origin:0 0;">CN=Keys</div>
<div class="b" style="left:687px;top:379.1px;width:10px;height:0;border-top:1px dotted #555"></div>
<svg class="b" style="left:697.50px;top:374.20px;" width="12" height="12" viewBox="0 0 12 12"><rect x="0.5" y="0.5" width="11" height="11" rx="2" fill="#666"/><rect x="2.5" y="5" width="7" height="2" fill="#fff"/><rect x="5" y="2.5" width="2" height="7" fill="#fff"/></svg>
<svg class="b" style="left:712.60px;top:375.50px;" width="10" height="8" viewBox="0 0 10 8"><path d="M0 0.3 H3.8 L4.8 1.6 H9.4 A0.6 0.6 0 0 1 10 2.2 V7.6 H0 Z" fill="#1a1a1a"/></svg>
<div class="t" style="left:727.00px;top:370.59px;font-size:14.75px;color:#222;font-weight:normal;transform:scaleX(0.9011);transform-origin:0 0;">OU=LDAP_Fozzz</div>
<div class="b" style="left:987.50px;top:125.00px;width:11.50px;height:598.00px;border-left:1px solid #e3e3e3;border-right:1px solid #e3e3e3;border-top:1px solid #e3e3e3;border-bottom:1px solid #e3e3e3;box-sizing:border-box"></div>
<svg class="b" style="left:990.50px;top:419.00px;" width="7" height="10" viewBox="0 0 7 10"><path d="M5.5 1 L1.5 5 L5.5 9" fill="none" stroke="#111" stroke-width="1.6"/></svg>
<div class="t" style="left:1013.10px;top:130.89px;font-size:14.75px;color:#222;font-weight:normal;transform:scaleX(0.9461);transform-origin:0 0;">Custom LDAP filter</div>
<div class="b" style="left:1135.30px;top:132.40px;width:174.70px;height:24.10px;border:1px solid #d6d6d6;box-sizing:border-box"></div>
<div class="t" style="left:1143.10px;top:134.39px;font-size:14.75px;color:#666;font-weight:normal;transform:scaleX(0.9194);transform-origin:0 0;">(objectClass=*)</div>
<div class="b" style="left:1318.00px;top:132.00px;width:52.00px;height:24.50px;border:1px solid #d6d6d6;box-sizing:border-box"></div>
<div class="t" style="left:1326.00px;top:134.39px;font-size:14.75px;color:#222;font-weight:normal;transform:scaleX(0.9703);transform-origin:0 0;">Apply</div>
<div class="b" style="left:999.00px;top:157.00px;width:601.00px;height:39.00px;background:#f6f6f6"></div>
<div class="b" style="left:1006.00px;top:164.30px;width:130.00px;height:24.50px;border:1px solid #d6d6d6;box-sizing:border-box;background:#fff"></div>
<svg class="b" style="left:1014.00px;top:169.00px;" width="19" height="15" viewBox="0 0 19 15"><g fill="#111"><rect x="0" y="0.5" width="2" height="1.6"/><rect x="3" y="0.5" width="12" height="1.6"/><rect x="0" y="3.5" width="2" height="1.6"/><rect x="3" y="3.5" width="12" height="1.6"/><rect x="0" y="6.5" width="2" height="1.6"/><rect x="3" y="6.5" width="12" height="1.6"/><rect x="0" y="9.5" width="2" height="1.6"/><rect x="3" y="9.5" width="8" height="1.6"/><rect x="13.2" y="8" width="2" height="7"/><rect x="10.7" y="10.5" width="7" height="2"/></g></svg>
<div class="t" style="left:1035.20px;top:165.99px;font-size:14.75px;color:#222;font-weight:normal;transform:scaleX(0.9310);transform-origin:0 0;">Add All Results</div>
<div class="b" style="left:1144.00px;top:165.00px;width:1.00px;height:23.00px;background:#d6d6d6"></div>
<div class="b" style="left:1153.30px;top:164.40px;width:239.20px;height:24.60px;border:1px solid #d6d6d6;box-sizing:border-box;background:#fff"></div>
<div class="b" style="left:1360.50px;top:165.00px;width:1.00px;height:23.00px;background:#d6d6d6"></div>
<div class="t" style="left:1161.20px;top:166.29px;font-size:14.75px;color:#666;font-weight:normal;transform:scaleX(0.8791);transform-origin:0 0;">Search</div>
<svg class="b" style="left:1369.50px;top:170.50px;" width="14" height="13" viewBox="0 0 14 13"><circle cx="5.5" cy="5.5" r="4.2" fill="none" stroke="#111" stroke-width="2"/><path d="M8.5 8.5 L12.6 12.3" stroke="#111" stroke-width="2.4" stroke-linecap="round"/></svg>
<div class="b" style="left:1402.70px;top:164.20px;width:191.10px;height:24.80px;border:1px solid #d6d6d6;box-sizing:border-box;background:#fff"></div>
<div class="b" style="left:1402.70px;top:164.20px;width:60.50px;height:24.80px;background:#4b9258"></div>
<div class="b" style="left:1526.50px;top:165.00px;width:1.00px;height:23.00px;background:#d6d6d6"></div>
<div class="t" style="left:1410.70px;top:166.89px;font-size:14.75px;color:#fff;font-weight:normal;transform:scaleX(0.9389);transform-origin:0 0;">Groups</div>
<div class="t" style="left:1471.10px;top:166.89px;font-size:14.75px;color:#222;font-weight:normal;transform:scaleX(0.9360);transform-origin:0 0;">Custom</div>
<div class="t" style="left:1534.00px;top:166.89px;font-size:14.75px;color:#222;font-weight:normal;transform:scaleX(0.9078);transform-origin:0 0;">Selected</div>
<div class="b" style="left:998.00px;top:196.00px;width:602.00px;height:526.50px;border-left:1px solid #d6d6d6;box-sizing:border-box;background:#fff"></div>
<div class="b" style="left:999.00px;top:196.00px;width:601.00px;height:35.50px;background:#f4f4f4;border-top:1px solid #d0d0d0;border-bottom:1px solid #d0d0d0;box-sizing:border-box"></div>
<div class="b" style="left:1299.00px;top:197.00px;width:1.00px;height:124.50px;background:#d6d6d6"></div>
<div class="t" style="left:1125.00px;top:203.39px;font-size:14.75px;color:#222;font-weight:normal;transform:scaleX(0.9017);transform-origin:0 0;">ID</div>
<svg class="b" style="left:1143.50px;top:206.00px;" width="9" height="14" viewBox="0 0 9 14"><path d="M0.5 6 L4.5 1 L8.5 6 Z M0.5 8 L4.5 13 L8.5 8 Z" fill="#888"/></svg>
<div class="t" style="left:1415.00px;top:203.39px;font-size:14.75px;color:#222;font-weight:normal;transform:scaleX(0.9070);transform-origin:0 0;">Name</div>
<svg class="b" style="left:1455.00px;top:206.00px;" width="9" height="14" viewBox="0 0 9 14"><path d="M0.5 6 L4.5 1 L8.5 6 Z M0.5 8 L4.5 13 L8.5 8 Z" fill="#888"/></svg>
<div class="b" style="left:999.00px;top:261.00px;width:601.00px;height:30.00px;background:#fefaa9"></div>
<div class="b" style="left:999.00px;top:291.00px;width:601.00px;height:30.50px;background:#f4f4f4"></div>
<div class="b" style="left:999.00px;top:260.50px;width:601.00px;height:1.00px;background:#e6e6e6"></div>
<div class="b" style="left:999.00px;top:290.50px;width:601.00px;height:1.00px;background:#e6e6e6"></div>
<div class="b" style="left:999.00px;top:321.00px;width:601.00px;height:1.00px;background:#e6e6e6"></div>
<div class="b" style="left:1299.00px;top:197.00px;width:1.00px;height:124.50px;background:#d6d6d6"></div>
<div class="t" style="left:1027.50px;top:236.89px;font-size:14.75px;color:#222;font-weight:normal;transform:scaleX(0.9811);transform-origin:0 0;">kythuat</div>
<div class="t" style="left:1306.90px;top:236.89px;font-size:14.75px;color:#222;font-weight:normal;transform:scaleX(0.9811);transform-origin:0 0;">kythuat</div>
<div class="t" style="left:1027.50px;top:266.89px;font-size:14.75px;color:#222;font-weight:normal;transform:scaleX(0.8593);transform-origin:0 0;">sale</div>
<div class="t" style="left:1306.90px;top:266.89px;font-size:14.75px;color:#222;font-weight:normal;transform:scaleX(0.8593);transform-origin:0 0;">sale</div>
<div class="t" style="left:1027.50px;top:296.89px;font-size:14.75px;color:#222;font-weight:normal;transform:scaleX(0.8960);transform-origin:0 0;">Yang Ho</div>
<div class="t" style="left:1306.90px;top:296.89px;font-size:14.75px;color:#222;font-weight:normal;transform:scaleX(0.8960);transform-origin:0 0;">Yang Ho</div>
<div class="b" style="left:999.00px;top:693.00px;width:601.00px;height:29.50px;background:#f4f4f4;border-top:1px solid #d0d0d0;border-bottom:1px solid #d6d6d6;box-sizing:border-box"></div>
<div class="b" style="left:663.00px;top:722.50px;width:937.00px;height:37.50px;background:#f3f3f3"></div>
<div class="b" style="left:1017.00px;top:730.00px;width:112.00px;height:23.60px;background:#4b9258"></div>
<div class="t" style="left:1062.60px;top:732.72px;font-size:15.25px;color:#fff;font-weight:normal;transform:scaleX(0.9455);transform-origin:0 0;">OK</div>
<div class="b" style="left:1135.00px;top:730.00px;width:112.60px;height:23.60px;border:1px solid #d6d6d6;box-sizing:border-box;background:#fff"></div>
<div class="t" style="left:1170.60px;top:732.72px;font-size:15.25px;color:#222;font-weight:normal;transform:scaleX(0.8716);transform-origin:0 0;">Cancel</div>
<div class="b" style="left:1100.00px;top:276.00px;width:142.00px;height:52.00px;background:#fff;border:1px solid #333;box-sizing:border-box;box-shadow:2px 2px 3px rgba(0,0,0,0.3)"></div>
<svg class="b" style="left:1110.00px;top:282.00px;" width="12" height="12" viewBox="0 0 12 12"><path d="M6 0.5 V11.5 M0.5 6 H11.5" stroke="#111" stroke-width="2.6"/></svg>
<div class="t" style="left:1129.00px;top:279.39px;font-size:14.75px;color:#222;font-weight:normal;transform:scaleX(0.9083);transform-origin:0 0;">Add Selected</div>
<svg class="b" style="left:1110.00px;top:310.00px;" width="12" height="4" viewBox="0 0 12 4"><rect x="0" y="0.5" width="12" height="2.6" fill="#aaa"/></svg>
<div class="t" style="left:1129.00px;top:304.89px;font-size:14.75px;color:#9a9a9a;font-weight:normal;transform:scaleX(0.8970);transform-origin:0 0;">Remove Selected</div>
<div class="b" style="left:1563.20px;top:366.00px;width:46.80px;height:31.80px;background:#fff;border-radius:16px;box-shadow:0 1px 6px rgba(0,0,0,0.18)"></div>
<svg class="b" style="left:1566.00px;top:370.00px;" width="26" height="24" viewBox="0 0 26 24"><path d="M12.5 5 C10.8 8 8.6 10.6 8.6 13.6 A4.2 4.2 0 0 0 17 13.6 C17 10.6 14.4 8 12.5 5 Z" fill="#1a8cf0"/><circle cx="14.6" cy="14" r="1.1" fill="#9fd0ff"/><path d="M4.5 10.7 Q5.0 13.0 7.3 13.5 Q5.0 14.0 4.5 16.3 Q4.0 14.0 1.7000000000000002 13.5 Q4.0 13.0 4.5 10.7 Z" fill="#2a9af5"/><path d="M20 0.9000000000000004 Q20.6 3.6 23.3 4.2 Q20.6 4.8 20 7.5 Q19.4 4.8 16.7 4.2 Q19.4 3.6 20 0.9000000000000004 Z" fill="#2a9af5"/><path d="M19.3 18.0 Q19.650000000000002 19.45 21.1 19.8 Q19.650000000000002 20.150000000000002 19.3 21.6 Q18.95 20.150000000000002 17.5 19.8 Q18.95 19.45 19.3 18.0 Z" fill="#2a9af5"/></svg>
<div class="b" style="left:1563.20px;top:416.20px;width:33.90px;height:32.80px;background:#fff;border-radius:50%;box-shadow:0 1px 6px rgba(0,0,0,0.18)"></div>
<svg class="b" style="left:1571.50px;top:424.00px;" width="18" height="17" viewBox="0 0 18 17"><path d="M3 0.5 L12 11 M15 0.5 L6 11" stroke="#222" stroke-width="1.3"/><circle cx="4.5" cy="13" r="2.4" fill="none" stroke="#222" stroke-width="1.4"/><circle cx="13.5" cy="13" r="2.4" fill="none" stroke="#222" stroke-width="1.4"/></svg>
<div class="b" style="left:1563.00px;top:457.00px;width:47.00px;height:36.80px;background:#fff;border-radius:18px;box-shadow:0 1px 6px rgba(0,0,0,0.18)"></div>
<svg class="b" style="left:1569.50px;top:464.00px;" width="24" height="24" viewBox="0 0 24 24"><defs><linearGradient id="qg" x1="0" y1="1" x2="1" y2="0"><stop offset="0" stop-color="#27b4f7"/><stop offset="0.3" stop-color="#0b5cf6"/><stop offset="0.7" stop-color="#0b5cf6"/><stop offset="1" stop-color="#27b4f7"/></linearGradient></defs><path d="M11.4 0.6 A10.8 10.8 0 1 0 11.4 22.2 H22.4 V13.5 A10.8 10.8 0 0 0 11.4 0.6 Z M11.4 5 A6.4 6.4 0 1 1 11.4 17.8 A6.4 6.4 0 1 1 11.4 5 Z" fill="url(#qg)" fill-rule="evenodd"/></svg>
<div class="b" style="left:1589.00px;top:39.00px;width:11.00px;height:721.00px;background:linear-gradient(to right, rgba(0,0,0,0), rgba(0,0,0,0.025) 50%, rgba(0,0,0,0.09))"></div>
<div class="t" style="left:1299.70px;top:693.99px;font-size:31.5px;color:rgba(120,120,120,0.78);font-weight:bold;transform:scaleX(0.9922);transform-origin:0 0;">Thegioifirewall.com</div>
<svg class="b" style="left:1577.00px;top:701.00px;" width="17" height="15" viewBox="0 0 17 15"><ellipse cx="8.5" cy="7.5" rx="8.3" ry="7.3" fill="#5a5a5a"/><text x="8.5" y="12" text-anchor="middle" font-family="Liberation Sans" font-size="12" fill="#e8e8e8">3</text></svg>
<div class="b" style="left:1.50px;top:238.00px;width:233.50px;height:35.60px;border:3px solid #f00;box-sizing:border-box;box-shadow:2px 2px 3px rgba(0,0,0,0.45), inset 1px 1px 4px rgba(0,0,0,0.45)"></div>
<div class="b" style="left:326.60px;top:113.50px;width:210.50px;height:23.00px;border:2.6px solid #f00;box-sizing:border-box;box-shadow:2px 2px 3px rgba(0,0,0,0.45), inset 1px 1px 4px rgba(0,0,0,0.45)"></div>
<div class="b" style="left:265.20px;top:333.50px;width:63.50px;height:32.20px;border:2.8px solid #f00;box-sizing:border-box;box-shadow:2px 2px 3px rgba(0,0,0,0.45), inset 1px 1px 4px rgba(0,0,0,0.45)"></div>
<div class="b" style="left:778.20px;top:70.30px;width:270.90px;height:39.00px;border:3px solid #f00;box-sizing:border-box;box-shadow:2px 2px 3px rgba(0,0,0,0.45), inset 1px 1px 4px rgba(0,0,0,0.45)"></div>
<div class="b" style="left:691.30px;top:365.00px;width:151.60px;height:29.60px;border:2.4px solid #f00;box-sizing:border-box;box-shadow:2px 2px 3px rgba(0,0,0,0.45), inset 1px 1px 4px rgba(0,0,0,0.45)"></div>
<div class="b" style="left:1100.00px;top:276.00px;width:143.60px;height:24.30px;border:2.8px solid #f00;box-sizing:border-box;box-shadow:2px 2px 3px rgba(0,0,0,0.45), inset 1px 1px 4px rgba(0,0,0,0.45)"></div>
<svg class="b" style="left:243.80px;top:245.20px;overflow:visible;filter:drop-shadow(1.3px 1.6px 1.2px rgba(0,0,0,0.55))" width="12" height="17" viewBox="-2.5 -2.5 12 17"><path d="M0.6 3.2 L2.6 0.9 V12.1" fill="none" stroke="#fff" stroke-width="4.6" stroke-linejoin="round" stroke-linecap="round"/><path d="M0.6 3.2 L2.6 0.9 V12.1" fill="none" stroke="#f00" stroke-width="1.9" stroke-linejoin="miter" stroke-linecap="square"/></svg>
<svg class="b" style="left:312.40px;top:117.20px;overflow:visible;filter:drop-shadow(1.3px 1.6px 1.2px rgba(0,0,0,0.55))" width="12" height="17" viewBox="-2.5 -2.5 12 17"><path d="M0.9 3.4 V0.9 H5.4 V4.8 L0.9 10.2 V11.1 H5.9" fill="none" stroke="#fff" stroke-width="4.6" stroke-linejoin="round" stroke-linecap="round"/><path d="M0.9 3.4 V0.9 H5.4 V4.8 L0.9 10.2 V11.1 H5.9" fill="none" stroke="#f00" stroke-width="1.9" stroke-linejoin="miter" stroke-linecap="square"/></svg>
<svg class="b" style="left:245.60px;top:339.20px;overflow:visible;filter:drop-shadow(1.3px 1.6px 1.2px rgba(0,0,0,0.55))" width="12" height="17" viewBox="-2.5 -2.5 12 17"><path d="M0.9 3.0 V0.9 H5.2 V11.1 H0.9 V9.0 M2.3 5.9 H5.2" fill="none" stroke="#fff" stroke-width="4.6" stroke-linejoin="round" stroke-linecap="round"/><path d="M0.9 3.0 V0.9 H5.2 V11.1 H0.9 V9.0 M2.3 5.9 H5.2" fill="none" stroke="#f00" stroke-width="1.9" stroke-linejoin="miter" stroke-linecap="square"/></svg>
<svg class="b" style="left:753.50px;top:92.40px;overflow:visible;filter:drop-shadow(1.3px 1.6px 1.2px rgba(0,0,0,0.55))" width="12" height="17" viewBox="-2.5 -2.5 12 17"><path d="M5.6 12 L6.4 0.9 L0.6 8.1 H6.9" fill="none" stroke="#fff" stroke-width="4.6" stroke-linejoin="round" stroke-linecap="round"/><path d="M5.6 12 L6.4 0.9 L0.6 8.1 H6.9" fill="none" stroke="#f00" stroke-width="1.9" stroke-linejoin="miter" stroke-linecap="square"/></svg>
<svg class="b" style="left:675.20px;top:373.00px;overflow:visible;filter:drop-shadow(1.3px 1.6px 1.2px rgba(0,0,0,0.55))" width="12" height="17" viewBox="-2.5 -2.5 12 17"><path d="M5.1 0.9 H0.9 V5.7 H5.1 V11.1 H0.9 V9.2" fill="none" stroke="#fff" stroke-width="4.6" stroke-linejoin="round" stroke-linecap="round"/><path d="M5.1 0.9 H0.9 V5.7 H5.1 V11.1 H0.9 V9.2" fill="none" stroke="#f00" stroke-width="1.9" stroke-linejoin="miter" stroke-linecap="square"/></svg>
<svg class="b" style="left:1082.20px;top:285.00px;overflow:visible;filter:drop-shadow(1.3px 1.6px 1.2px rgba(0,0,0,0.55))" width="12" height="17" viewBox="-2.5 -2.5 12 17"><path d="M5.6 2.8 V0.9 H1.1 V11.1 H5.6 V5.7 H1.1" fill="none" stroke="#fff" stroke-width="4.6" stroke-linejoin="round" stroke-linecap="round"/><path d="M5.6 2.8 V0.9 H1.1 V11.1 H5.6 V5.7 H1.1" fill="none" stroke="#f00" stroke-width="1.9" stroke-linejoin="miter" stroke-linecap="square"/></svg>
</body></html>
